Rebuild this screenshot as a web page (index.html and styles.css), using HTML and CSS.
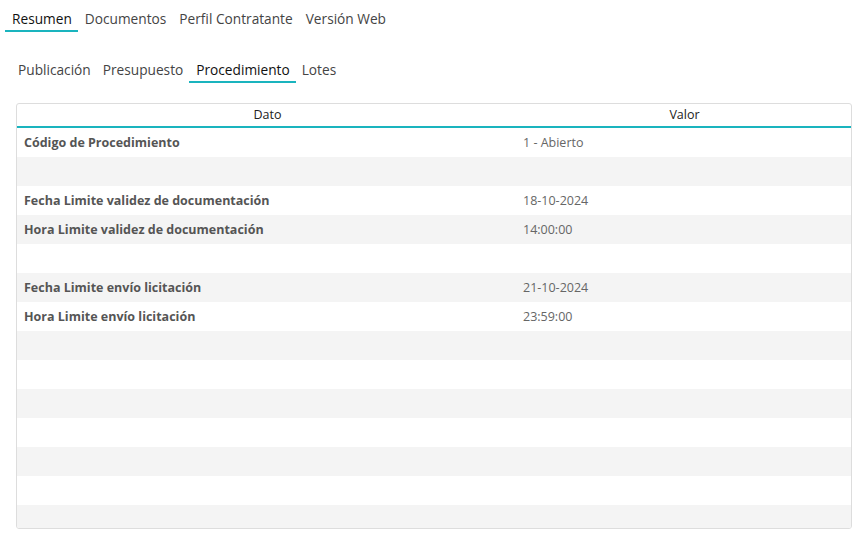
FILE: index.html
```html
<!DOCTYPE html>
<html>
<head>
  <title>Licitación - Resumen</title>
  <link rel="stylesheet" href="styles.css">
</head>
<body>
  <!-- Main tabs -->
  <nav class="tabs main-tabs">
    <a class="tab active">Resumen</a>
    <a class="tab">Documentos</a>
    <a class="tab">Perfil Contratante</a>
    <a class="tab">Versión Web</a>
  </nav>

  <!-- Sub tabs of Resumen -->
  <nav class="tabs sub-tabs">
    <a class="tab">Publicación</a>
    <a class="tab">Presupuesto</a>
    <a class="tab active">Procedimiento</a>
    <a class="tab">Lotes</a>
  </nav>

  <!-- Procedure data grid -->
  <div class="grid">
    <div class="grid-head">
      <div class="cell col-dato">Dato</div>
      <div class="cell col-valor">Valor</div>
    </div>
    <div class="grid-body">
      <div class="row"><div class="cell col-dato label">Código de Procedimiento</div><div class="cell col-valor value">1 - Abierto</div></div>
      <div class="row"><div class="cell col-dato label"></div><div class="cell col-valor value"></div></div>
      <div class="row"><div class="cell col-dato label">Fecha Limite validez de documentación</div><div class="cell col-valor value">18-10-2024</div></div>
      <div class="row"><div class="cell col-dato label">Hora Limite validez de documentación</div><div class="cell col-valor value">14:00:00</div></div>
      <div class="row"><div class="cell col-dato label"></div><div class="cell col-valor value"></div></div>
      <div class="row"><div class="cell col-dato label">Fecha Limite envío licitación</div><div class="cell col-valor value">21-10-2024</div></div>
      <div class="row"><div class="cell col-dato label">Hora Limite envío licitación</div><div class="cell col-valor value">23:59:00</div></div>
      <div class="row"></div>
      <div class="row"></div>
      <div class="row"></div>
      <div class="row"></div>
      <div class="row"></div>
      <div class="row"></div>
      <div class="row"></div>
      <div class="row"></div>
    </div>
  </div>
</body>
</html>
```

FILE: styles.css
```css
body {
  margin: 0;
  padding: 0 12px 0 0;
  font-family: "Open Sans", "Noto Sans", sans-serif;
  background-color: #ffffff;
  color: #333333;
}

/* Tab strips */
.tabs {
  display: flex;
}

.tab {
  padding: 0 6px;
  font-size: 13.7px;
  color: #444444;
  border-bottom: 2px solid transparent;
  cursor: pointer;
  white-space: nowrap;
}

.tab.active {
  color: #111111;
  border-bottom-color: #1ab4be;
}

.main-tabs {
  padding: 8px 0 0 5px;
  line-height: 22px;
}

.main-tabs .tab {
  padding: 0 6px 0 7px;
}

.sub-tabs {
  padding: 26px 0 0 12px;
  line-height: 23px;
}

.sub-tabs .tab.active {
  padding: 0 6px 0 7px;
}

/* Data grid */
.grid {
  margin: 20px 0 0 16px;
  width: 834px;
  height: 424px;
  border: 1px solid #dddddd;
  border-radius: 3px;
  overflow: hidden;
  font-size: 12.5px;
}

.grid-head {
  display: flex;
  height: 22px;
  line-height: 22px;
  border-bottom: 2px solid #1ab4be;
  color: #222222;
}

.grid-head .cell {
  text-align: center;
}

.grid-body .row {
  display: flex;
  height: 29px;
  line-height: 29px;
}

.grid-body .row:nth-child(even) {
  background-color: #f4f4f4;
}

.cell {
  box-sizing: border-box;
}

.col-dato {
  width: 501px;
  padding-left: 7px;
}

.col-valor {
  flex: 1;
  padding-left: 5px;
}

.grid-head .col-dato,
.grid-head .col-valor {
  padding-left: 0;
}

.label {
  font-weight: bold;
  color: #555555;
}

.value {
  color: #666666;
}
```
